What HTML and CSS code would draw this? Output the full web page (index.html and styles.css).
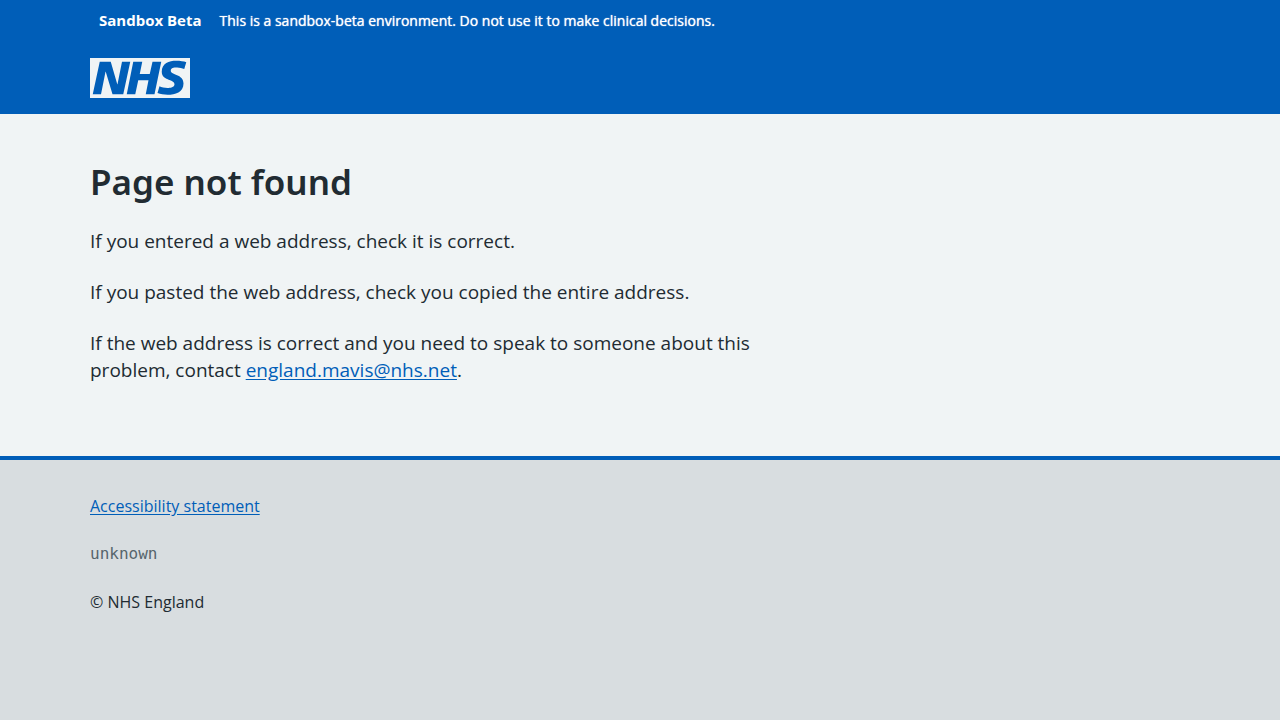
FILE: index.html
```html
<!DOCTYPE html>
<html lang="en">
<head>
  <meta charset="utf-8">
  <meta name="viewport" content="width=device-width, initial-scale=1">
  <title>Page not found</title>
  <link rel="stylesheet" href="styles.css">
</head>
<body>
  <div class="environment">
    <div class="container environment-inner">
      <strong class="environment-tag">Sandbox Beta</strong>
      <span class="environment-text">This is a sandbox-beta environment. Do not use it to make clinical decisions.</span>
    </div>
  </div>
  <header class="header">
    <div class="container">
      <a class="logo-link" href="#" aria-label="NHS">
        <svg class="logo" viewBox="0 0 200 80" width="100" height="40" aria-hidden="true">
          <path fill="currentColor" d="M200 0v80H0V0h200Zm-27.5 5.5c-14.5 0-29 5-29 22 0 10.2 7.7 13.5 14.7 16.3l.7.3c5.4 2 10.1 3.9 10.1 8.4 0 6.5-8.5 7.5-14 7.5s-12.5-1.5-16-3.5L135 70c5.5 2 13.5 3.5 20 3.5 15.5 0 32-4.5 32-22.5 0-19.5-25.5-16.5-25.5-25.5 0-5.5 5.5-6.5 12.5-6.5a35 35 0 0 1 14.5 3l4-13.5c-4.5-2-12-3-20-3Zm-131 2h-22l-14 65H22l9-45h.5l13.5 45h21.5l14-65H64l-9 45h-.5l-13-45Zm63 0h-18l-13 65h17l6-28H117l-5.5 28H129l13.5-65H125L119.5 32h-20l5-24.5Z"/>
        </svg>
      </a>
    </div>
  </header>
  <main class="main container">
    <div class="column">
      <h1 class="title">Page not found</h1>
      <p class="paragraph">If you entered a web address, check it is correct.</p>
      <p class="paragraph">If you pasted the web address, check you copied the entire address.</p>
      <p class="paragraph">If the web address is correct and you need to speak to someone about this problem, contact <a class="link" href="mailto:england.mavis@nhs.net">england.mavis@nhs.net</a>.</p>
    </div>
  </main>
  <footer class="footer">
    <div class="container footer-inner">
      <a class="link" href="#">Accessibility statement</a>
      <code class="version">unknown</code>
      <p class="copyright">© NHS England</p>
    </div>
  </footer>
</body>
</html>
```
FILE: styles.css
```css
* {
  box-sizing: border-box;
}

body {
  margin: 0;
  min-height: 100vh;
  display: flex;
  flex-direction: column;
  background: #f0f4f5;
  color: #212b32;
  font-family: "Open Sans", "Noto Sans", sans-serif;
  font-size: 19px;
  line-height: 27px;
}

.container {
  width: 100%;
  max-width: 1164px;
  margin: 0 auto;
  padding: 0 32px;
}

.environment,
.header {
  background: #005eb8;
  color: #ffffff;
}

.environment-inner {
  display: flex;
  align-items: baseline;
  gap: 18px;
  padding-top: 8px;
  padding-bottom: 9px;
  padding-left: 41px;
  line-height: 24px;
}

.environment-tag {
  font-size: 15px;
  font-weight: 700;
}

.environment-text {
  font-size: 14px;
  text-shadow: 0 0 1px #ffffff;
}

.header {
  padding: 16px 0;
}

.logo-link {
  display: inline-block;
  vertical-align: top;
  color: #f0f4f5;
}

.logo {
  display: block;
}

.main {
  padding-top: 48px;
  padding-bottom: 48px;
}

.column {
  max-width: 700px;
}

.title {
  margin: 0 0 26px;
  font-family: "Noto Sans", "Open Sans", sans-serif;
  font-size: 35px;
  font-weight: 600;
  line-height: 40px;
}

.paragraph {
  margin: 0 0 24px;
}

.link {
  color: #005eb8;
  text-decoration: underline;
  text-underline-offset: 2px;
}

.footer {
  flex: 1;
  border-top: 4px solid #005eb8;
  background: #d8dde0;
  font-size: 16px;
  line-height: 24px;
}

.footer-inner {
  display: flex;
  flex-direction: column;
  align-items: flex-start;
  gap: 24px;
  padding-top: 34px;
  padding-bottom: 32px;
}

.version {
  color: #56656c;
  font-family: "DejaVu Sans Mono", monospace;
  font-size: 16px;
}

.copyright {
  margin: 0;
}
```
